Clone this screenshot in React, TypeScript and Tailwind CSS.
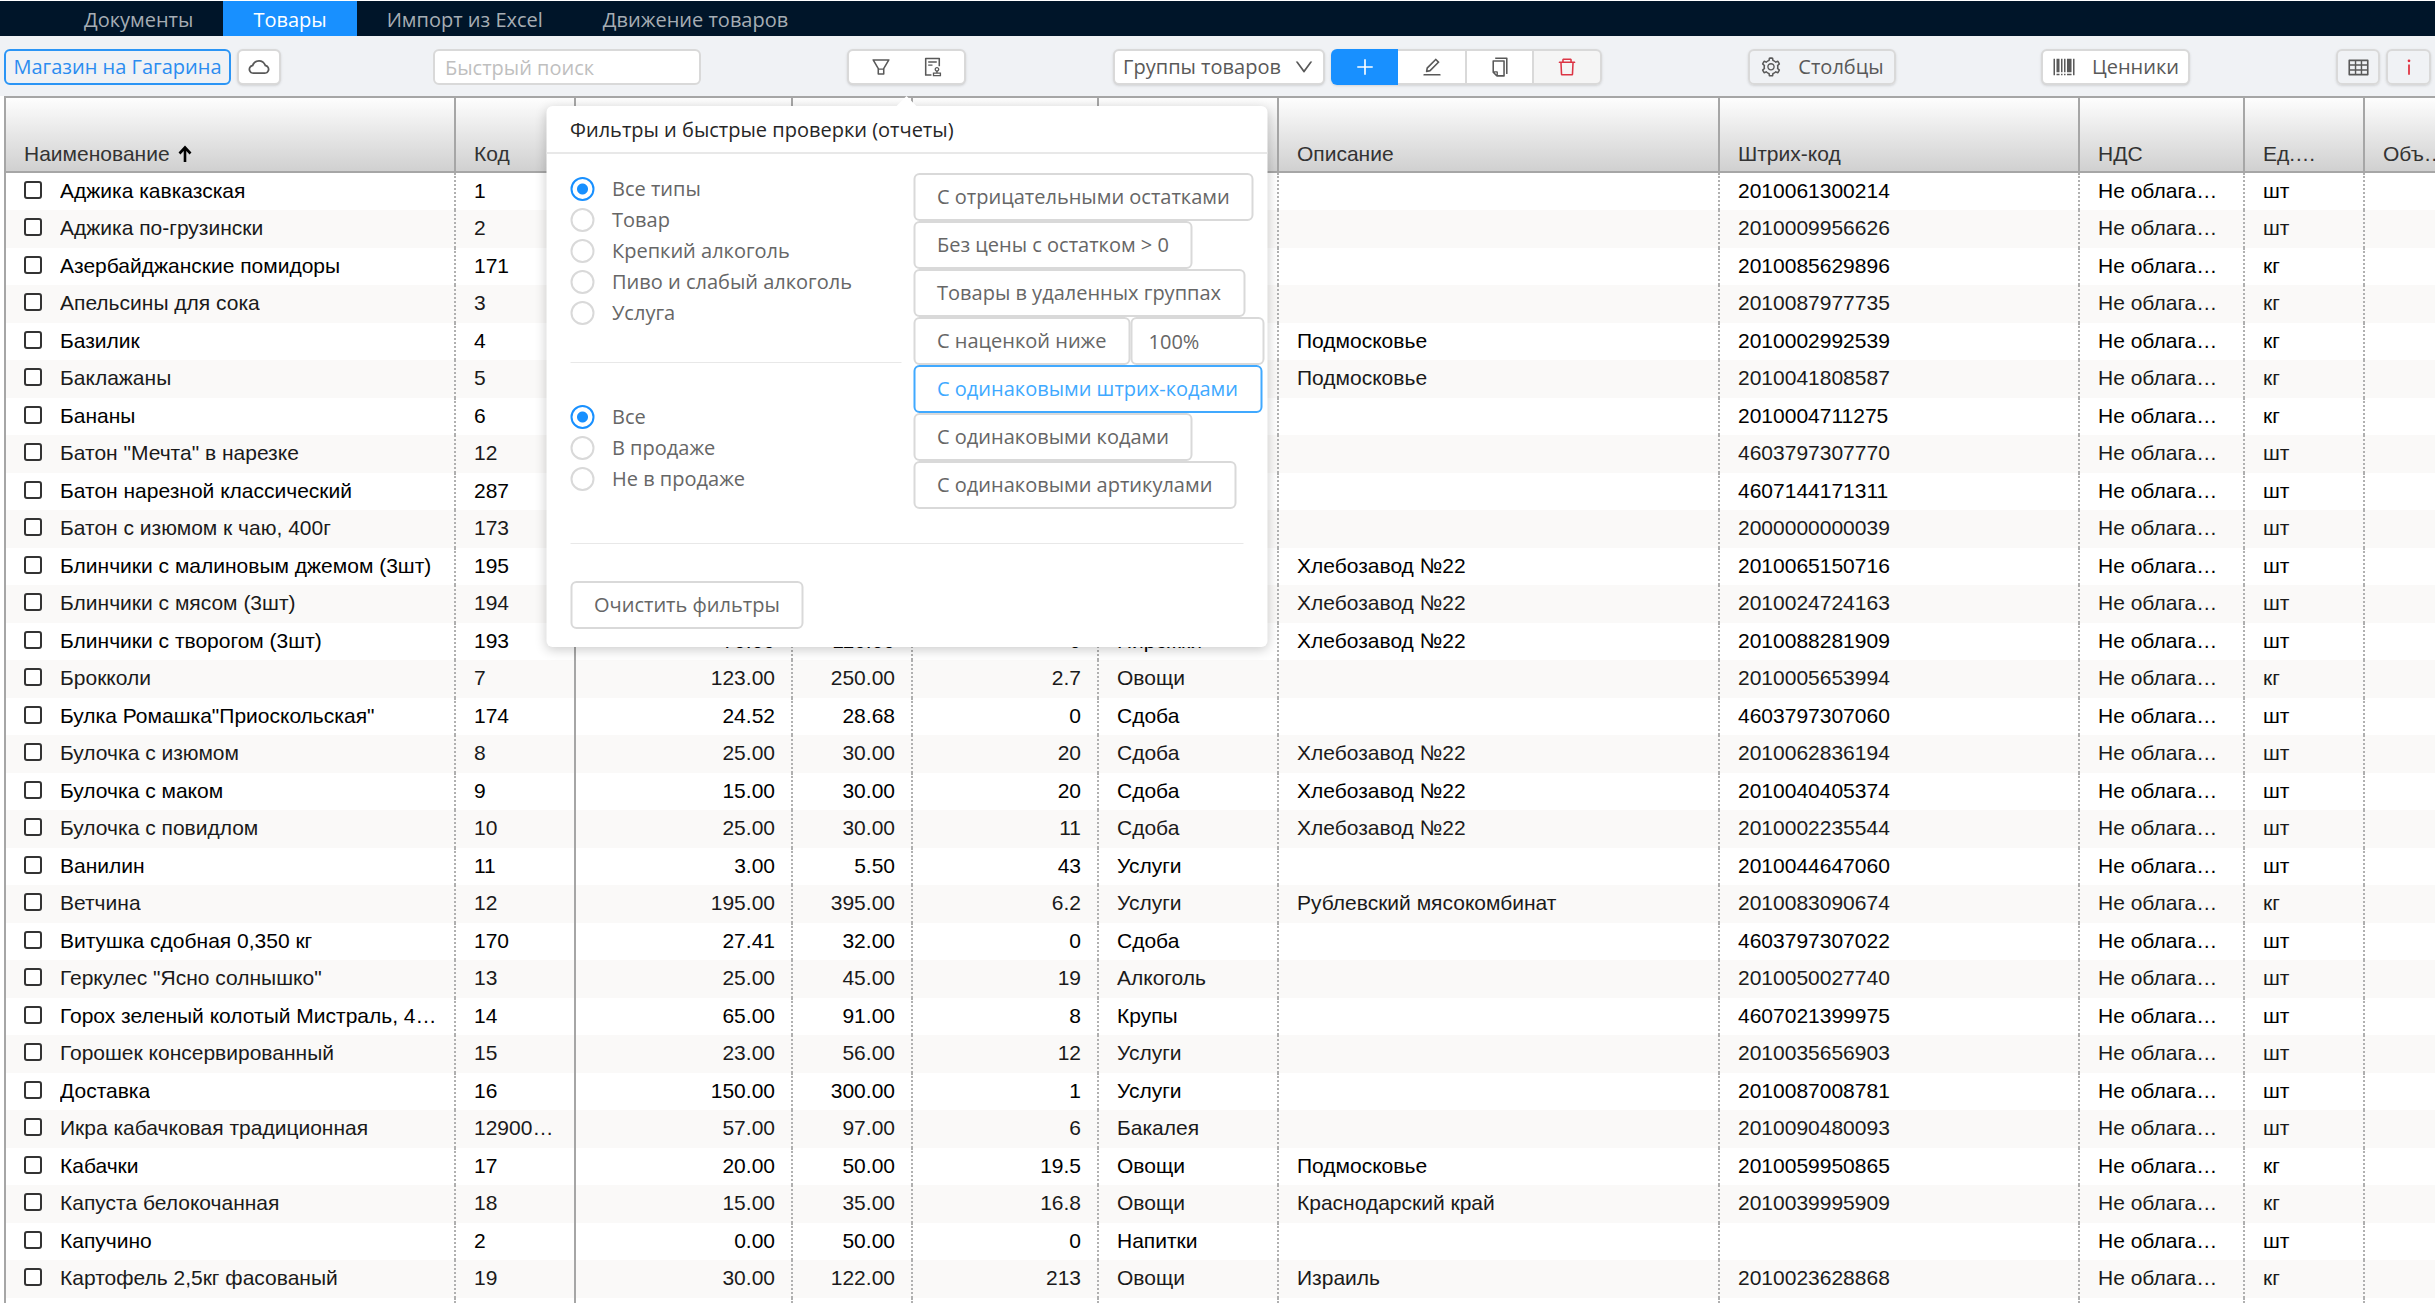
import type { ReactNode } from "react";
import {
  AiOutlineAudit,
  AiOutlineBarcode,
  AiOutlineCloud,
  AiOutlineCopy,
  AiOutlineDelete,
  AiOutlineDown,
  AiOutlineEdit,
  AiOutlineFilter,
  AiOutlineInfo,
  AiOutlinePlus,
  AiOutlineSetting,
  AiOutlineTable,
} from "react-icons/ai";

type Row = [
  name: string,
  code: string,
  cost: string,
  price: string,
  stock: string,
  group: string,
  description: string,
  barcode: string,
  unit: string,
];

const rows: Row[] = [
  ["Аджика кавказская", "1", "", "", "", "", "", "2010061300214", "шт"],
  ["Аджика по-грузински", "2", "", "", "", "", "", "2010009956626", "шт"],
  ["Азербайджанские помидоры", "171", "", "", "", "", "", "2010085629896", "кг"],
  ["Апельсины для сока", "3", "", "", "", "", "", "2010087977735", "кг"],
  ["Базилик", "4", "", "", "", "", "Подмосковье", "2010002992539", "кг"],
  ["Баклажаны", "5", "", "", "", "", "Подмосковье", "2010041808587", "кг"],
  ["Бананы", "6", "", "", "", "", "", "2010004711275", "кг"],
  ['Батон "Мечта" в нарезке', "12", "", "", "", "", "", "4603797307770", "шт"],
  ["Батон нарезной классический", "287", "", "", "", "", "", "4607144171311", "шт"],
  ["Батон с изюмом к чаю, 400г", "173", "", "", "", "", "", "2000000000039", "шт"],
  ["Блинчики с малиновым джемом (3шт)", "195", "", "", "", "", "Хлебозавод №22", "2010065150716", "шт"],
  ["Блинчики с мясом (3шт)", "194", "", "", "", "", "Хлебозавод №22", "2010024724163", "шт"],
  ["Блинчики с творогом (3шт)", "193", "70.00", "110.00", "0", "Пирожки", "Хлебозавод №22", "2010088281909", "шт"],
  ["Брокколи", "7", "123.00", "250.00", "2.7", "Овощи", "", "2010005653994", "кг"],
  ['Булка Ромашка"Приоскольская"', "174", "24.52", "28.68", "0", "Сдоба", "", "4603797307060", "шт"],
  ["Булочка с изюмом", "8", "25.00", "30.00", "20", "Сдоба", "Хлебозавод №22", "2010062836194", "шт"],
  ["Булочка с маком", "9", "15.00", "30.00", "20", "Сдоба", "Хлебозавод №22", "2010040405374", "шт"],
  ["Булочка с повидлом", "10", "25.00", "30.00", "11", "Сдоба", "Хлебозавод №22", "2010002235544", "шт"],
  ["Ванилин", "11", "3.00", "5.50", "43", "Услуги", "", "2010044647060", "шт"],
  ["Ветчина", "12", "195.00", "395.00", "6.2", "Услуги", "Рублевский мясокомбинат", "2010083090674", "кг"],
  ["Витушка сдобная 0,350 кг", "170", "27.41", "32.00", "0", "Сдоба", "", "4603797307022", "шт"],
  ['Геркулес "Ясно солнышко"', "13", "25.00", "45.00", "19", "Алкоголь", "", "2010050027740", "шт"],
  ["Горох зеленый колотый Мистраль, 450г", "14", "65.00", "91.00", "8", "Крупы", "", "4607021399975", "шт"],
  ["Горошек консервированный", "15", "23.00", "56.00", "12", "Услуги", "", "2010035656903", "шт"],
  ["Доставка", "16", "150.00", "300.00", "1", "Услуги", "", "2010087008781", "шт"],
  ["Икра кабачковая традиционная", "12900001", "57.00", "97.00", "6", "Бакалея", "", "2010090480093", "шт"],
  ["Кабачки", "17", "20.00", "50.00", "19.5", "Овощи", "Подмосковье", "2010059950865", "кг"],
  ["Капуста белокочанная", "18", "15.00", "35.00", "16.8", "Овощи", "Краснодарский край", "2010039995909", "кг"],
  ["Капучино", "2", "0.00", "50.00", "0", "Напитки", "", "", "шт"],
  ["Картофель 2,5кг фасованый", "19", "30.00", "122.00", "213", "Овощи", "Израиль", "2010023628868", "кг"],
  ["", "", "", "", "", "", "", "", ""],
];

const tabs = ["Документы", "Товары", "Импорт из Excel", "Движение товаров"];

const headCell =
  "overflow-hidden border-r-2 border-[#a6a6a6] px-[18px] pb-[5px] text-left align-bottom font-normal text-ellipsis whitespace-nowrap";
const cellBase = "overflow-hidden border-r-2 pt-0 pr-4 pb-0.5 pl-[18px] text-ellipsis whitespace-nowrap";
const cell = `${cellBase} border-dotted border-[#b0b0b0]`;
const numberCell = `${cell} text-right`;

const toolButton =
  "flex h-9 items-center justify-center rounded-md border-2 border-[#d9d9d9] text-[#595959] shadow-sm";
const checkButton =
  "h-12 rounded-md border-2 px-[22px] text-[20px] whitespace-nowrap";

function NavBar() {
  return (
    <nav className="mt-px flex h-[35px] bg-[#001529] pl-[54px] text-[20px]">
      {tabs.map((tab) => (
        <a
          key={tab}
          href="#"
          className={
            tab === "Товары"
              ? "flex items-center bg-[#1890ff] px-[30px] pt-0.5 text-white"
              : "flex items-center px-[30px] pt-0.5 text-[#a6adb4]"
          }
        >
          {tab}
        </a>
      ))}
    </nav>
  );
}

function SortArrow() {
  return (
    <svg width="14" height="18" viewBox="0 0 14 18" fill="none" stroke="black" strokeWidth="2.6">
      <path d="M7 17V3M1.5 8.5 7 2.5l5.5 6" />
    </svg>
  );
}

function Radio({ group, label, checked }: { group: string; label: string; checked?: boolean }) {
  return (
    <label className="flex h-[31px] items-center gap-[18px]">
      <input
        type="radio"
        name={group}
        defaultChecked={checked}
        className="size-6 appearance-none rounded-full border-2 border-[#d9d9d9] bg-white checked:border-[#1890ff] checked:bg-[radial-gradient(circle,#1890ff_5px,white_6px)]"
      />
      {label}
    </label>
  );
}

function CheckButton({ children, active }: { children: ReactNode; active?: boolean }) {
  return (
    <button
      type="button"
      className={`${checkButton} ${active ? "border-[#40a9ff] text-[#40a9ff]" : "border-[#d9d9d9]"}`}
    >
      {children}
    </button>
  );
}

function FilterPopover() {
  return (
    <div
      role="dialog"
      aria-label="Фильтры и быстрые проверки"
      className="absolute top-[57px] left-1/2 z-10 w-[721px] -translate-x-1/2 rounded-md bg-white text-[20px] text-[#666] shadow-[0_3px_12px_rgba(0,0,0,0.2)]"
    >
      <div className="absolute -top-[7px] left-1/2 size-[14px] -translate-x-1/2 rotate-45 bg-white" />
      <h2 className="relative flex h-12 items-center border-b-2 border-[#e8e8e8] px-6 pt-0.5 font-medium text-[#262626]">
        Фильтры и быстрые проверки (отчеты)
      </h2>
      <div className="flex px-6 pt-[19px]">
        <div className="w-[343px] shrink-0 pr-3">
          <div>
            <Radio group="type" label="Все типы" checked />
            <Radio group="type" label="Товар" />
            <Radio group="type" label="Крепкий алкоголь" />
            <Radio group="type" label="Пиво и слабый алкоголь" />
            <Radio group="type" label="Услуга" />
          </div>
          <hr className="mt-[34px] mb-[38px] border-[#e8e8e8]" />
          <div>
            <Radio group="sale" label="Все" checked />
            <Radio group="sale" label="В продаже" />
            <Radio group="sale" label="Не в продаже" />
          </div>
        </div>
        <div className="flex flex-col items-start">
          <CheckButton>С отрицательными остатками</CheckButton>
          <CheckButton>Без цены с остатком &gt; 0</CheckButton>
          <CheckButton>Товары в удаленных группах</CheckButton>
          <div className="flex">
            <CheckButton>С наценкой ниже</CheckButton>
            <input
              aria-label="Наценка"
              defaultValue="100%"
              className="h-12 w-[134px] rounded-md border-2 border-[#d9d9d9] px-4"
            />
          </div>
          <CheckButton active>С одинаковыми штрих-кодами</CheckButton>
          <CheckButton>С одинаковыми кодами</CheckButton>
          <CheckButton>С одинаковыми артикулами</CheckButton>
        </div>
      </div>
      <div className="px-6 pt-[34px] pb-[18px]">
        <hr className="mb-[37px] border-[#e8e8e8]" />
        <CheckButton>Очистить фильтры</CheckButton>
      </div>
    </div>
  );
}

function Toolbar() {
  return (
    <div className="flex h-15 items-start bg-[#f0f2f5] px-1 pt-[13px] text-[20px] text-[#595959]">
      <button
        type="button"
        className="h-9 w-[227px] rounded-md border-2 border-[#2b95f5] bg-[#f0f2f5] whitespace-nowrap text-[#2b8cf0]"
      >
        Магазин на Гагарина
      </button>
      <button type="button" aria-label="Облако" className={`${toolButton} ml-1.5 w-11 bg-white`}>
        <AiOutlineCloud size={24} />
      </button>
      <input
        type="search"
        aria-label="Быстрый поиск"
        placeholder="Быстрый поиск"
        className="ml-[152px] h-9 w-[268px] rounded-md border-2 border-[#d9d9d9] bg-white px-2.5 placeholder:text-[#bfbfbf]"
      />
      <div className="relative ml-[146px]">
        <div className={`${toolButton} w-[119px] gap-[30px] bg-white`}>
          <button type="button" aria-label="Фильтр">
            <AiOutlineFilter size={22} />
          </button>
          <button type="button" aria-label="Проверки">
            <AiOutlineAudit size={22} />
          </button>
        </div>
        <FilterPopover />
      </div>
      <button type="button" className={`${toolButton} ml-[147px] w-[212px] gap-3 bg-white whitespace-nowrap`}>
        Группы товаров
        <AiOutlineDown size={22} />
      </button>
      <div className="ml-1.5 flex rounded-md shadow-sm">
        <button
          type="button"
          aria-label="Добавить"
          className="flex h-9 w-[67px] items-center justify-center rounded-l-md bg-[#1890ff] text-white"
        >
          <AiOutlinePlus size={22} />
        </button>
        <button
          type="button"
          aria-label="Изменить"
          className="flex h-9 w-[69px] items-center justify-center border-y-2 border-r-2 border-[#d9d9d9] bg-white"
        >
          <AiOutlineEdit size={22} />
        </button>
        <button
          type="button"
          aria-label="Копировать"
          className="flex h-9 w-[67px] items-center justify-center border-y-2 border-r-2 border-[#d9d9d9] bg-white"
        >
          <AiOutlineCopy size={22} />
        </button>
        <button
          type="button"
          aria-label="Удалить"
          className="flex h-9 w-[68px] items-center justify-center rounded-r-md border-y-2 border-r-2 border-[#d9d9d9] bg-[#f5f5f5] text-[#dc3545]"
        >
          <AiOutlineDelete size={22} />
        </button>
      </div>
      <button type="button" className={`${toolButton} ml-[146px] w-[148px] gap-4`}>
        <AiOutlineSetting size={22} />
        Столбцы
      </button>
      <button type="button" className={`${toolButton} ml-[145px] w-[149px] gap-4 bg-white`}>
        <AiOutlineBarcode size={24} />
        Ценники
      </button>
      <button type="button" aria-label="Таблица" className={`${toolButton} ml-auto w-11`}>
        <AiOutlineTable size={23} />
      </button>
      <button type="button" aria-label="Информация" className={`${toolButton} ml-1.5 w-[45px]`}>
        <AiOutlineInfo size={22} className="text-[#e02d3c]" />
      </button>
    </div>
  );
}

function GoodsTable() {
  return (
    <table className="w-[calc(100%+36px)] table-fixed border-separate border-spacing-0 border-l-2 border-[#a6a6a6] font-['Liberation_Sans',Arial,sans-serif] text-[21px] leading-6 text-black">
      <colgroup>
        <col className="w-[450px]" />
        <col className="w-[120px]" />
        <col className="w-[217px]" />
        <col className="w-[120px]" />
        <col className="w-[186px]" />
        <col className="w-[180px]" />
        <col className="w-[441px]" />
        <col className="w-[360px]" />
        <col className="w-[165px]" />
        <col className="w-[120px]" />
        <col />
      </colgroup>
      <thead>
        <tr className="h-[77px] bg-linear-to-b from-white to-[#cfcfcf] text-[#333] [&>th]:border-y-2">
          <th className={headCell}>
            <span className="flex items-center gap-2">
              Наименование
              <SortArrow />
            </span>
          </th>
          <th className={headCell}>Код</th>
          <th className={headCell} aria-label="Закупочная цена" />
          <th className={headCell} aria-label="Цена" />
          <th className={headCell} aria-label="Остаток" />
          <th className={headCell} aria-label="Группа" />
          <th className={headCell}>Описание</th>
          <th className={headCell}>Штрих-код</th>
          <th className={headCell}>НДС</th>
          <th className={headCell}>Ед.…</th>
          <th className={headCell}>Объ…</th>
        </tr>
      </thead>
      <tbody>
        {rows.map(([name, code, cost, price, stock, group, description, barcode, unit], i) => (
          <tr key={i} className="h-[37px] even:h-[38px] even:bg-[#faf9f8] even:text-[#1a1a1a]">
            <td className={cell}>
              {name && (
                <label className="flex items-center gap-[18px]">
                  <input
                    type="checkbox"
                    className="mb-0.5 size-[18px] shrink-0 appearance-none rounded-[3px] border-2 border-[#333] bg-white"
                  />
                  <span className="truncate">{name}</span>
                </label>
              )}
            </td>
            <td className={`${cellBase} border-[#a6a6a6]`}>{code}</td>
            <td className={numberCell}>{cost}</td>
            <td className={numberCell}>{price}</td>
            <td className={numberCell}>{stock}</td>
            <td className={cell}>{group}</td>
            <td className={cell}>{description}</td>
            <td className={cell}>{barcode}</td>
            <td className={cell}>{name && "Не облагается"}</td>
            <td className={cell}>{unit}</td>
            <td className={cell} />
          </tr>
        ))}
      </tbody>
    </table>
  );
}

export default function App() {
  return (
    <div className="flex h-screen flex-col overflow-hidden bg-white font-['Open_Sans','Noto_Sans',sans-serif]">
      <NavBar />
      <Toolbar />
      <main className="min-h-0 flex-1 overflow-hidden pl-1">
        <GoodsTable />
      </main>
    </div>
  );
}
